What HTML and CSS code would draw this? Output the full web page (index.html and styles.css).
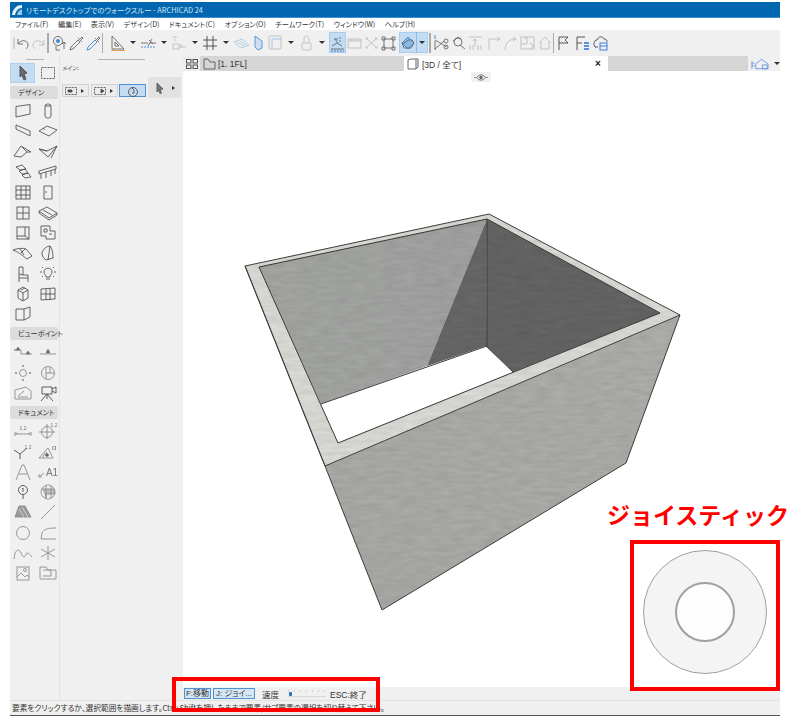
FILE: index.html
```html
<!DOCTYPE html>
<html lang="ja">
<head>
<meta charset="utf-8">
<title>ARCHICAD 24</title>
<link rel="stylesheet" href="styles.css">
</head>
<body>
<div class="window">
  <header class="titlebar">
    <svg class="logo" viewBox="0 0 12 12" width="12" height="12"><path d="M1 11C2 4 6 1 11 1V4C7 4 5 7 4 11Z" fill="#e8f0f8"/><path d="M6 11C7 7 9 5.500 11 5.500V11Z" fill="#9cc4e4"/></svg>
    <span>リモートデスクトップでのウォークスルー - ARCHICAD 24</span>
  </header>
  <nav class="menu">
    <span>ファイル(F)</span><span>編集(E)</span><span>表示(V)</span><span>デザイン(D)</span><span>ドキュメント(C)</span><span>オプション(O)</span><span>チームワーク(T)</span><span>ウィンドウ(W)</span><span>ヘルプ(H)</span>
  </nav>
  <div class="toolbar">
    <div class="t"><svg class="ic" viewBox="0 0 17 18"><path class="g" d="M1 3V15"/><path d="M5 5V10H10M5 10C8 5 15 6 15 11C15 13 14 14 13 15"/></svg></div>
    <div class="t"><svg class="ic lt" viewBox="0 0 17 18"><path d="M14 6V11H9M14 11C11 5 3 6 3 11C3 13 4 14 5 15"/></svg></div>
    <div class="sep"></div>
    <div class="t ml2"><svg class="ic" viewBox="0 0 17 18"><circle cx="7" cy="7" r="4.500"/><circle cx="7" cy="7" r="2" fill="#3a86d8" stroke="none"/><path d="M5 12V16H9M13 8V15M11 10L13 8L15 10"/></svg></div>
    <div class="t"><svg class="ic" viewBox="0 0 17 18"><path d="M2 16L3 13L10 6L12 8L5 15ZM10 4L14 8M12 5L14 3L15 4L13 6" /></svg></div>
    <div class="t"><svg class="ic" viewBox="0 0 17 18"><path d="M2 16L3 13L10 6L12 8L5 15Z" stroke="#3a86d8"/><path d="M10 4L14 8M12 5L14 3L15 4L13 6"/></svg></div>
    <div class="sep"></div>
    <div class="t ml6"><svg class="ic" viewBox="0 0 17 18"><path d="M3 2V15H15ZM6 8V12H10Z"/><path d="M2 16.500H16" stroke="#e09040"/></svg></div>
    <div class="a"></div>
    <div class="t"><svg class="ic" viewBox="0 0 17 18"><path d="M1 9H8M10 9H16M8 12L12 5M9 6L13 10"/><path d="M1 13H16" stroke="#3a86d8" stroke-dasharray="2 1"/></svg></div>
    <div class="a"></div>
    <div class="t"><svg class="ic lt" viewBox="0 0 17 18"><path d="M2 3H6M3 6H5M2 10H8V15H2ZM8 13H15M10 13V10" /></svg></div>
    <div class="a"></div>
    <div class="t"><svg class="ic dk" viewBox="0 0 17 18"><path d="M5 2V16M11 2V16M1 6H15M1 12H15"/></svg></div>
    <div class="a"></div>
    <div class="t"><svg class="ic bl" viewBox="0 0 17 18"><path d="M1 8L9 5L16 11L8 14ZM4 8L11 12M7 7L13 11" /></svg></div>
    <div class="t"><svg class="ic bl2" viewBox="0 0 17 18"><path d="M5 2L12 7V14L8 16L5 13Z" fill="#cfe0f4"/></svg></div>
    <div class="t"><svg class="ic lt" viewBox="0 0 17 18"><rect x="2" y="2" width="12" height="13" rx="1"/><path d="M5 5H14M5 5V15" stroke="#9cc0e8"/></svg></div>
    <div class="a"></div>
    <div class="t"><svg class="ic lt" viewBox="0 0 17 18"><rect x="4" y="9" width="9" height="7" rx="1"/><path d="M6 9V5C6 1 11 1 11 5V9"/></svg></div>
    <div class="a"></div>
    <div class="t on"><svg class="ic" viewBox="0 0 17 18"><path d="M2 15H15M3 12L8 9L13 12M6 5L9 9M5 5H9"/><path d="M2 17H15M11 3V8" stroke="#2a70c0" stroke-dasharray="2 1"/></svg></div>
    <div class="t"><svg class="ic lt" viewBox="0 0 17 18"><rect x="2" y="5" width="13" height="9"/><path d="M2 7H15M5 5V7M8 5V7M11 5V7"/></svg></div>
    <div class="t"><svg class="ic lt" viewBox="0 0 17 18"><path d="M4 5L13 13M13 5L4 13M5 4H3V6M12 4H14V6M5 14H3V12M12 14H14V12"/></svg></div>
    <div class="t"><svg class="ic" viewBox="0 0 17 18"><rect x="4" y="5" width="9" height="9"/><path d="M2 3H5V6H2ZM12 3H15V6H12ZM2 13H5V16H2ZM12 13H15V16H12Z" /></svg></div>
    <div class="split ml2">
      <div class="t"><svg class="ic" viewBox="0 0 17 18"><path d="M3 9L9 3L15 9L9 15Z" fill="#8cb8e8" stroke="#3a86d8"/><path d="M3 9H6L9 6H13L15 9L12 14H5Z"/></svg></div>
      <div class="a narrow"></div>
    </div>
    <div class="sep"></div>
    <div class="t ml2"><svg class="ic" viewBox="0 0 17 18"><path d="M2 1V5" stroke="#3a86d8"/><path d="M2 6L14 13M2 15L11 7M2 7V16"/><circle cx="13" cy="7" r="2"/><circle cx="13" cy="13" r="2"/></svg></div>
    <div class="t"><svg class="ic" viewBox="0 0 17 18"><path d="M10 11L15 15"/><circle cx="8" cy="8" r="4"/><path d="M3 7L8 3L11 5"/></svg></div>
    <div class="t"><svg class="ic lt" viewBox="0 0 17 18"><path d="M2 3H15M8 5V13M6 7L8 5L10 7M3 16V11M6 16V11M11 16V11M14 16V11"/></svg></div>
    <div class="t ml1"><svg class="ic lt" viewBox="0 0 17 18"><path d="M4 16V5H15M12 3L15 5L12 7"/></svg></div>
    <div class="t"><svg class="ic lt" viewBox="0 0 17 18"><path d="M3 16C3 9 7 5 14 5M11 3L14 5L11 7"/></svg></div>
    <div class="t"><svg class="ic lt" viewBox="0 0 17 18"><rect x="2" y="3" width="13" height="12"/><path d="M8 3V10M5 5L8 3M2 10H8M11 9L15 12L11 15"/></svg></div>
    <div class="t"><svg class="ic lt" viewBox="0 0 17 18"><path d="M3 9L9 3L15 9M5 8V15H13V8"/></svg></div>
    <div class="sep"></div>
    <div class="t ml2"><svg class="ic dk" viewBox="0 0 17 18"><path d="M3 16V3H12L9 6L12 9H3"/></svg></div>
    <div class="t ml1"><svg class="ic dk" viewBox="0 0 17 18"><path d="M3 16V3H11M3 9H8"/><path d="M10 9H15M10 12H15M10 15H15" stroke="#2a70e0" stroke-width="1.500"/></svg></div>
    <div class="t ml1"><svg class="ic dk" viewBox="0 0 17 18"><path d="M6 13H3C1 10 2 6 5 6C6 2 11 2 12 5C14 5 15 6 15 8"/><rect x="8" y="9" width="7" height="7" stroke="#2a70e0"/><path d="M8 12H15" stroke="#2a70e0"/></svg></div>
  </div>
  <div class="main">
    <aside class="tools">
      <div class="grip"></div>
      <div class="grid top">
        <div class="tool on"><svg class="ti" viewBox="0 0 20 18"><path d="M7 2L14 9L11 10L13 15L11 16L9 11L7 13Z" fill="#6a6a6a" stroke="#444"/></svg></div>
        <div class="tool"><svg class="ti" viewBox="0 0 20 18"><rect x="3.500" y="3.500" width="13" height="11" stroke-dasharray="2 1"/></svg></div>
      </div>
      <h3 class="head">デザイン</h3>
      <div class="grid">
        <div class="tool"><svg class="ti" viewBox="0 0 20 18"><path d="M3 4.500L17 2.500V12L3 15Z"/></svg></div>
        <div class="tool"><svg class="ti" viewBox="0 0 20 18"><rect x="7" y="2" width="6" height="14" rx="2.500"/><path d="M7 4H13"/></svg></div>
        <div class="tool"><svg class="ti" viewBox="0 0 20 18"><path d="M3 3L17 9V14L3 7Z"/></svg></div>
        <div class="tool"><svg class="ti" viewBox="0 0 20 18"><path d="M1 9L9 4L19 8L11 14ZM5 6L7 8"/></svg></div>
        <div class="tool"><svg class="ti" viewBox="0 0 20 18"><path d="M1 13L8 3L18 9L14 9L9 4M1 13L8 14L14 9"/></svg></div>
        <div class="tool"><svg class="ti" viewBox="0 0 20 18"><path d="M1 6L10 14L19 3L9 8ZM1 6L9 8M13 15L19 3"/></svg></div>
        <div class="tool"><svg class="ti" viewBox="0 0 20 18"><path d="M3 4L9 2L13 6L7 7ZM6 8L12 6L15 10L9 11ZM9 12L15 10L18 14L12 15Z"/></svg></div>
        <div class="tool"><svg class="ti" viewBox="0 0 20 18"><path d="M1 8L18 3V6L1 11ZM3 11V16M8 9V15M13 8V13M17 6V11"/></svg></div>
        <div class="tool"><svg class="ti" viewBox="0 0 20 18"><rect x="3" y="3" width="14" height="13"/><path d="M3 7H17M3 12H17M8 3V16M13 3V16"/></svg></div>
        <div class="tool"><svg class="ti" viewBox="0 0 20 18"><path d="M6 3H14V16H6ZM8 8V10"/></svg></div>
        <div class="tool"><svg class="ti" viewBox="0 0 20 18"><rect x="4" y="3" width="12" height="12"/><path d="M10 3V15M4 9H16"/></svg></div>
        <div class="tool"><svg class="ti" viewBox="0 0 20 18"><path d="M1 7L9 3L19 9L11 14ZM5 6L14 11M1 7V9L11 16L19 11V9"/></svg></div>
        <div class="tool"><svg class="ti" viewBox="0 0 20 18"><rect x="4" y="3" width="12" height="12"/><path d="M12 3V12H4M12 12L16 15"/></svg></div>
        <div class="tool"><svg class="ti" viewBox="0 0 20 18"><path d="M3 2H12V7H17V15H8V12H3ZM6 5H9V8H6ZM11 10H14"/></svg></div>
        <div class="tool"><svg class="ti" viewBox="0 0 20 18"><path d="M0 6C5 4 10 4 13 5L19 12L14 15C10 12 7 9 0 6ZM7 5L11 11M12 5L8 9"/></svg></div>
        <div class="tool"><svg class="ti" viewBox="0 0 20 18"><path d="M4 9C5 5 9 2 12 2C14 5 15 8 15 14L8 16C5 14 4 12 4 9ZM12 2L10 16"/></svg></div>
        <div class="tool"><svg class="ti" viewBox="0 0 20 18"><path d="M6 2H10V10H15V13H6ZM6 13V17M15 13V17M10 10L6 9"/></svg></div>
        <div class="tool"><svg class="ti" viewBox="0 0 20 18"><path d="M6 7C6 2 14 2 14 7C14 9 12 10 12 12H8C8 10 6 9 6 7ZM8 14H12M2 7H4M16 7H18M4 2L5 3M16 2L15 3M4 12L5 11M16 12L15 11"/></svg></div>
        <div class="tool"><svg class="ti" viewBox="0 0 20 18"><path d="M5 5L10 2L15 5V13L10 16L5 13ZM5 5L10 8L15 5M10 8V16M8 5L12 3"/></svg></div>
        <div class="tool"><svg class="ti" viewBox="0 0 20 18"><path d="M3 4L17 3V14L3 15ZM8 4V15M12 4V15M3 9H17"/></svg></div>
        <div class="tool"><svg class="ti" viewBox="0 0 20 18"><path d="M3 4H11V15H3ZM11 4L17 2V12L11 15"/></svg></div>
      </div>
      <h3 class="head">ビューポイント</h3>
      <div class="grid">
        <div class="tool"><svg class="ti gr" viewBox="0 0 20 18"><path d="M1 7H8V11H19M1 7H7"/><path d="M3 7L5 4L7 7ZM13 11L15 8L17 11Z" fill="#555"/></svg></div>
        <div class="tool"><svg class="ti gr" viewBox="0 0 20 18"><path d="M2 11H18"/><path d="M8 10L10 6L12 10Z" fill="#555"/></svg></div>
        <div class="tool"><svg class="ti gr" viewBox="0 0 20 18"><circle cx="10" cy="9" r="3.500"/><path d="M10 1V3M10 15V17M2 9H4M16 9H18" stroke-width="1.500"/></svg></div>
        <div class="tool"><svg class="ti gr" viewBox="0 0 20 18"><circle cx="10" cy="9" r="6.500"/><path d="M8 3V15M8 9H16M12 3V9"/></svg></div>
        <div class="tool"><svg class="ti gr" viewBox="0 0 20 18"><path d="M2 15V6L13 3L18 7V15ZM5 12L11 7M5 13H15"/></svg></div>
        <div class="tool"><svg class="ti dk" viewBox="0 0 20 18"><path d="M4 3H14V10H4ZM14 5L18 3V9L14 7M9 10L3 17M9 10L15 17M9 10V15"/></svg></div>
      </div>
      <h3 class="head">ドキュメント</h3>
      <div class="grid">
        <div class="tool"><svg class="ti gr" viewBox="0 0 20 18"><path d="M2 12H18M2 10V14M18 10V14M5 12L3 11M15 12L17 11"/><text x="10" y="8" class="lbl">1.2</text></svg></div>
        <div class="tool"><svg class="ti gr" viewBox="0 0 20 18"><circle cx="9" cy="10" r="5.500"/><path d="M9 2V17M1 10H17"/><text x="16" y="5" class="lbl">1.2</text></svg></div>
        <div class="tool"><svg class="ti dk" viewBox="0 0 20 18"><path d="M1 7L7 11L14 5M7 11V16"/><text x="15" y="6" class="lbl">1.2</text></svg></div>
        <div class="tool"><svg class="ti gr" viewBox="0 0 20 18"><path d="M1 15H15L10 5ZM5 15C5 12 7 10 9 9"/><circle cx="9" cy="12" r="1.500" fill="#555"/><text x="16" y="7" class="lbl big">α</text></svg></div>
        <div class="tool"><svg class="ti gr" viewBox="0 0 20 18"><path d="M3 17L9 2H11L17 17M6 11H14"/></svg></div>
        <div class="tool"><svg class="ti gr" viewBox="0 0 20 18"><path d="M1 14L6 10M1 14H4M1 14V11"/><text x="14" y="13" class="lbl a1">A1</text></svg></div>
        <div class="tool"><svg class="ti dk" viewBox="0 0 20 18"><circle cx="10" cy="7" r="4.500"/><path d="M10 5V9M9 6L10 5M10 12V16"/></svg></div>
        <div class="tool"><svg class="ti gr" viewBox="0 0 20 18"><circle cx="10" cy="9" r="7"/><path d="M4 6H16L17 11H8V15" fill="#bbb"/><path d="M8 3V15M13 3V15"/></svg></div>
        <div class="tool"><svg class="ti gr" viewBox="0 0 20 18"><path d="M6 3H12L18 14H2Z" fill="#999"/><path d="M6 6L11 14M9 4L15 14" stroke="#ddd"/></svg></div>
        <div class="tool"><svg class="ti gr" viewBox="0 0 20 18"><path d="M3 16L17 2"/></svg></div>
        <div class="tool"><svg class="ti gr" viewBox="0 0 20 18"><circle cx="10" cy="9" r="6.500"/></svg></div>
        <div class="tool"><svg class="ti gr" viewBox="0 0 20 18"><path d="M3 15H18M3 15L4 9C6 5 10 4 18 4"/></svg></div>
        <div class="tool"><svg class="ti gr" viewBox="0 0 20 18"><path d="M1 15C2 5 6 4 8 9C10 14 12 14 13 10C14 8 16 9 19 13"/></svg></div>
        <div class="tool"><svg class="ti gr" viewBox="0 0 20 18"><path d="M10 2V16M3 5L17 13M3 13L17 5"/></svg></div>
        <div class="tool"><svg class="ti gr" viewBox="0 0 20 18"><rect x="4" y="3" width="12" height="13"/><path d="M4 13L8 9L12 13L14 11L16 13"/><circle cx="12" cy="6" r="1.500"/></svg></div>
        <div class="tool"><svg class="ti gr" viewBox="0 0 20 18"><path d="M2 15V3H8L10 6H18V15ZM5 6H13V12H5"/></svg></div>
      </div>
    </aside>
    <section class="info">
      <div class="grip wide"></div>
      <p class="info-label">メイン:</p>
      <div class="info-row">
        <button class="ib"><svg class="ti" viewBox="0 0 14 10"><rect x="1.500" y="1.500" width="11" height="7" stroke-dasharray="2 1"/><path d="M4 4H8V6H4Z" fill="#444"/></svg><i class="ra"></i></button>
        <button class="ib"><svg class="ti" viewBox="0 0 14 10"><rect x="1.500" y="1.500" width="11" height="7" stroke-dasharray="2 1"/><path d="M8 3L11 5L8 7Z" fill="#444"/></svg><i class="ra"></i></button>
        <button class="ib sel"><svg class="ti" viewBox="0 0 14 12"><circle cx="7" cy="7" r="4.500"/><path d="M5 2L8 5V8H6"/></svg></button>
        <button class="ib big"><svg class="ti" viewBox="0 0 14 14"><path d="M4 2L10 8L7 8.500L8.500 12L7 12.500L5.500 9L4 11Z" fill="#777" stroke="#555"/></svg><i class="ra"></i></button>
      </div>
    </section>
    <section class="view">
      <div class="tabs">
        <div class="tab-grid"><svg class="ic dk" viewBox="0 0 12 12"><rect x=".5" y="1.500" width="4.500" height="3.500"/><rect x="7" y="1.500" width="4.500" height="3.500"/><rect x=".5" y="7" width="4.500" height="3.500"/><rect x="7" y="7" width="4.500" height="3.500"/></svg></div>
        <div class="tab plan"><svg class="tab-ic" viewBox="0 0 13 12"><path d="M1 11V1H5L7 4H12V11Z"/></svg><span>[1. 1FL]</span></div>
        <div class="tab active"><svg class="tab-ic" viewBox="0 0 13 12"><path d="M1 2L4 1H11V9L9 11H1ZM9 1.500V11"/></svg><span>[3D / 全て]</span><b class="close">×</b></div>
        <div class="tab-fill"></div>
        <div class="tab-end"><svg class="end-ic" viewBox="0 0 19 12"><path d="M1 3V11M4 5H1M4 8H1M5 11V6L11 1L18 6V11ZM12 7H17V11H12Z"/></svg><i class="da"></i></div>
      </div>
      <div class="canvas">
        <div class="eye"><svg viewBox="0 0 16 8" width="14" height="7"><path d="M0 4H3M13 4H16" stroke="#7090c0"/><path d="M3 4C6 0 10 0 13 4C10 8 6 8 3 4Z" fill="none" stroke="#666"/><circle cx="8" cy="4" r="2" fill="#666"/></svg></div>
        <svg class="model" viewBox="183 71 597 616" preserveAspectRatio="none">
          <defs>
            <filter id="tex" x="0" y="0" width="100%" height="100%">
              <feTurbulence type="fractalNoise" baseFrequency="0.06 0.25" numOctaves="3" seed="4" result="n"/>
              <feColorMatrix in="n" type="matrix" values="0 0 0 0 0  0 0 0 0 0  0 0 0 0 0  .18 .18 0 0 -.12" result="d"/>
              <feComposite in="d" in2="SourceAlpha" operator="in" result="dd"/>
              <feMerge><feMergeNode in="SourceGraphic"/><feMergeNode in="dd"/></feMerge>
            </filter>
            <linearGradient id="lw" x1="0" y1="0" x2="1" y2="0"><stop offset="0" stop-color="#a4a6a3"/><stop offset="1" stop-color="#a0a2a0"/></linearGradient>
            <linearGradient id="fw" x1="0" y1="1" x2="1" y2="0"><stop offset="0" stop-color="#a8a9a5"/><stop offset="1" stop-color="#adaeaa"/></linearGradient>
          </defs>
          <g filter="url(#tex)">
            <path d="M259 267L487 219L427 366L321 404Z" fill="url(#lw)"/>
            <path d="M487 219L427 366L486 346Z" fill="#676867"/>
            <path d="M487 219L660 313L513 372L486 346Z" fill="#656565"/>
            <path d="M325 466L680 315L626 463L382 610Z" fill="url(#fw)"/>
            <path d="M245 266L489 214L680 315L325 466ZM259 267L338 443L660 313L487 219Z" fill="#dadbd6" fill-rule="evenodd"/>
          </g>
          <path d="M321 404L486 346L513 372L338 443Z" fill="#fff"/>
          <path d="M660 313L338 443L259 267L487 219Z" fill="none" stroke="#333" stroke-width="1"/>
          <path d="M245 266L489 214L680 315L626 463L382 610L325 466ZM245 266L325 466L680 315M487 219V346L321 404M486 346L513 372" fill="none" stroke="#3c3c3c" stroke-width="1"/>
        </svg>
      </div>
      <div class="controls">
        <button class="cb">F:移動</button>
        <button class="cb j">J: ジョイ...</button>
        <span class="speed">速度</span>
        <div class="slider"><i class="knob"></i></div>
        <span>ESC:終了</span>
      </div>
    </section>
  </div>
  <footer class="status">要素をクリックするか、選択範囲を描画します。Ctrl+Shiftを押したままで要素/サブ要素の選択を切り替えて下さい。</footer>
</div>
<div class="mark mark-bar"></div>
<div class="mark mark-stick"></div>
<div class="stick-title">ジョイスティック</div>
<div class="stick"><div class="stick-in"></div></div>
</body>
</html>
```
FILE: styles.css
```css
* { box-sizing: border-box; }
html, body { margin: 0; padding: 0; background: #fff; }
body {
  position: relative;
  width: 796px;
  height: 722px;
  overflow: hidden;
  font-family: "Noto Sans CJK JP", "Noto Sans", sans-serif;
  font-feature-settings: "palt";
  color: #333;
}
.window {
  margin: 2px 0 0 10px;
  width: 770px;
  height: 714px;
  display: flex;
  flex-direction: column;
  background: #f0f0f0;
  border-bottom: 1px solid #555;
}
.titlebar {
  height: 16px;
  flex: none;
  background: #0066b0;
  border-bottom: 1px solid #3c8fd0;
  color: #d5e5f3;
  font-size: 7.4px;
  display: flex;
  align-items: center;
  gap: 3px;
  padding-left: 1px;
  white-space: nowrap;
}
.logo { flex: none; }
.menu {
  height: 12px;
  flex: none;
  background: #fff;
  display: flex;
  align-items: center;
  gap: 9.5px;
  padding-left: 5px;
  font-size: 7.15px;
  color: #333;
  white-space: nowrap;
}
.toolbar {
  height: 25px;
  flex: none;
  display: flex;
  align-items: center;
  padding-left: 3px;
}
.t {
  width: 17px;
  height: 21px;
  flex: none;
  display: flex;
  align-items: center;
  justify-content: center;
}
.t.on { background: #c3dcf2; box-shadow: inset 0 0 0 1px #a6ccee; }
.ml1 { margin-left: 1px; }
.ml2 { margin-left: 2px; }
.ml6 { margin-left: 6px; }
.a {
  width: 14px;
  height: 21px;
  flex: none;
  position: relative;
}
.a::after {
  content: "";
  position: absolute;
  left: 4px;
  top: 9px;
  border: 3px solid transparent;
  border-top: 3px solid #333;
  border-bottom: 0;
}
.a.narrow { width: 11px; border-left: 1px solid #8ebde8; }
.a.narrow::after { left: 2px; }
.split {
  display: flex;
  flex: none;
  width: 29px;
  background: #c3dcf2;
  box-shadow: inset 0 0 0 1px #a6ccee;
  margin-right: 1px;
}
.t .ic { width: 17px; height: 18px; }
.sep { width: 1.5px; height: 20px; flex: none; background: #ababab; }
.ic { fill: none; stroke: #666; stroke-width: .9; display: block; filter: blur(.25px); }
.ic .g { stroke: #aaa; }
.ic.lt { stroke: #bcbcbc; }
.ic.dk { stroke: #444; }
.ic.bl { stroke: #aac8e6; }
.ic.bl2 { stroke: #4f8ad0; }
.main { flex: 1; display: flex; min-height: 0; }
.tools {
  width: 50px;
  flex: none;
  border-right: 1px solid #e4e4e4;
  position: relative;
}
.grip {
  height: 1px;
  width: 18px;
  margin-left: 16px;
  margin-top: 4px;
  background: #b4b4b4;
}
.grip.wide { width: 47px; margin-left: 38px; }
.grid {
  display: grid;
  grid-template-columns: 25px 25px;
  grid-auto-rows: 20.3px;
  margin-top: 2px;
}
.grid.top { margin-top: 3px; grid-auto-rows: 20px; }
.tool { display: flex; align-items: center; justify-content: center; }
.tool.on { background: #c3dcf2; box-shadow: inset 0 0 0 1px #b0d2f0; }
.ti { width: 20px; height: 18px; fill: none; stroke: #4c4c4c; stroke-width: .85; display: block; filter: blur(.25px); }
.ti.gr { stroke: #888; }
.ti.dk { stroke: #444; }
.lbl { font-size: 5px; text-anchor: middle; fill: #777; stroke: none; font-family: "Liberation Sans", sans-serif; }
.lbl.big { font-size: 8px; }
.lbl.a1 { font-size: 10px; }
.head {
  margin: 3px 1px 0 0;
  height: 13px;
  background: #dcdcdc;
  border-radius: 2px;
  font-size: 7.2px;
  font-weight: 400;
  line-height: 13px;
  padding-left: 8px;
  color: #333;
  white-space: nowrap;
}
.grid + .head + .grid { margin-top: 2px; }
.info { width: 123px; flex: none; }
.info-label { margin: 3px 0 0 2px; font-size: 5.8px; line-height: 9px; color: #444; }
.info-row { display: flex; align-items: flex-end; gap: 1.5px; margin: 5px 0 0 2px; }
.ib {
  width: 27px;
  height: 13px;
  padding: 0 3px 0 0;
  border: 1px solid #d2d2d2;
  background: #ececec;
  display: flex;
  align-items: center;
  justify-content: center;
  gap: 3px;
  flex: none;
}
.ib .ti { width: 14px; height: 10px; }
.ib.sel { background: #c3dcf2; border-color: #4f92d4; padding: 0; }
.ib.sel .ti { width: 14px; height: 12px; }
.ib.big { width: 33px; height: 21px; background: #e2e2e2; border-color: #e2e2e2; margin-left: 0; gap: 5px; padding: 0; margin-bottom: -1px; }
.ib.big .ti { width: 14px; height: 14px; }
.ra {
  width: 0;
  height: 0;
  border-left: 3px solid #333;
  border-top: 2.5px solid transparent;
  border-bottom: 2.5px solid transparent;
}
.view { flex: 1; display: flex; flex-direction: column; min-width: 0; }
.tabs {
  height: 15px;
  flex: none;
  margin-top: 1px;
  display: flex;
  background: #d5d5d5;
  font-family: "Liberation Sans", "Noto Sans CJK JP", sans-serif;
  font-size: 8.5px;
  color: #333;
}
.tab-grid {
  width: 17px;
  background: #ececec;
  display: flex;
  align-items: center;
  justify-content: center;
  flex: none;
}
.tab-grid .ic { width: 12px; height: 12px; }
.tab { display: flex; align-items: center; gap: 2px; white-space: nowrap; flex: none; }
.tab.plan { width: 204px; padding-left: 3px; background: #d5d5d5; }
.tab.active { width: 204px; padding-left: 3px; background: #fff; position: relative; }
.tab-ic { width: 13px; height: 12px; fill: none; stroke: #555; stroke-width: .9; flex: none; filter: blur(.25px); }
.close { position: absolute; left: 191px; top: 0; line-height: 15px; font-size: 10px; font-weight: 700; color: #222; }
.tab-fill { flex: 1; }
.tab-end {
  width: 32px;
  flex: none;
  background: #f0f0f0;
  display: flex;
  align-items: center;
  gap: 5px;
  padding-left: 3px;
}
.end-ic { width: 19px; height: 12px; fill: none; stroke: #5a94da; stroke-width: .9; }
.da { width: 0; height: 0; border: 3px solid transparent; border-top-color: #333; border-bottom: 0; }
.canvas { flex: 1; background: #fff; position: relative; min-height: 0; }
.eye {
  position: absolute;
  left: 288px;
  top: 1px;
  width: 20px;
  height: 10px;
  background: #f0f0f0;
  border-radius: 2px;
  display: flex;
  align-items: center;
  justify-content: center;
}
.model { position: absolute; inset: 0; width: 100%; height: 100%; }
.controls {
  height: 13px;
  flex: none;
  display: flex;
  align-items: center;
  padding-left: 1px;
  font-size: 8.5px;
  color: #333;
  font-family: "Liberation Sans", "Noto Sans CJK JP", sans-serif;
  white-space: nowrap;
}
.cb {
  height: 11px;
  width: 27px;
  padding: 0;
  border: 1px solid #4f92d4;
  background: #d4e6f6;
  font: inherit;
  font-size: 8px;
  line-height: 9px;
  color: #333;
  flex: none;
}
.cb.j { width: 42px; margin-left: 2px; }
.speed { margin-left: 7px; width: 26px; }
.slider {
  width: 38px;
  height: 7px;
  border-bottom: 1px solid #d8d8d8;
  background: repeating-linear-gradient(90deg, #d0d0d0 0 1px, transparent 1px 6px) 0 0 / 100% 2px no-repeat;
  position: relative;
  margin-right: 4px;
}
.knob { position: absolute; left: 1px; top: 2px; width: 3px; height: 4px; background: #2a70c0; border-radius: 1px; }
.status {
  height: 15px;
  flex: none;
  border-top: 1px solid #e2e2e2;
  padding-left: 2px;
  font-size: 7.7px;
  line-height: 13px;
  color: #333;
  white-space: nowrap;
}
.mark { position: absolute; border: 4px solid #f00; background: transparent; }
.mark-bar { left: 172px; top: 677px; width: 208px; height: 35px; }
.mark-stick { left: 630px; top: 540px; width: 150px; height: 151px; }
.stick-title {
  position: absolute;
  left: 607px;
  top: 497px;
  width: 189px;
  font-size: 23px;
  font-feature-settings: normal;
  line-height: 34px;
  font-weight: 700;
  color: #f00;
  white-space: nowrap;
}
.stick {
  position: absolute;
  left: 643px;
  top: 550px;
  width: 124px;
  height: 124px;
  border-radius: 50%;
  background: #f4f4f4;
  border: 1px solid #a0a0a0;
  display: flex;
  align-items: center;
  justify-content: center;
}
.stick-in {
  width: 60px;
  height: 60px;
  border-radius: 50%;
  background: #fdfdfd;
  border: 2px solid #a0a0a0;
}
```
